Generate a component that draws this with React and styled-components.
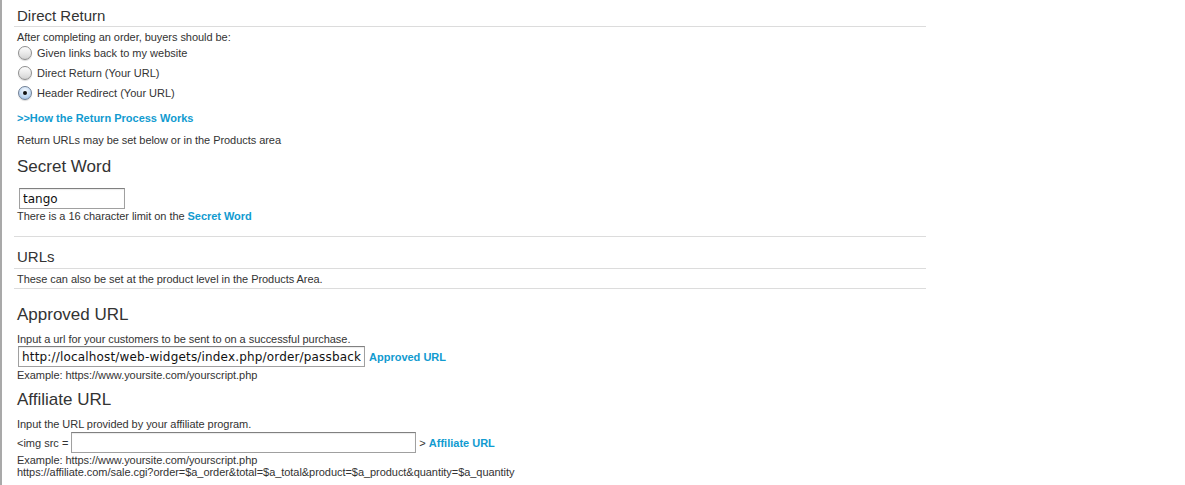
import styled, { createGlobalStyle } from 'styled-components'

const GlobalStyle = createGlobalStyle`
  html, body {
    margin: 0;
    padding: 0;
    background: #fff;
  }
  body {
    font-family: 'Liberation Sans', Arial, Helvetica, sans-serif;
    color: #333;
  }
`

const Page = styled.div`
  min-height: 485px;
  box-sizing: border-box;
  border-left: 2px solid #a9a9a9;
  padding: 5px 0 0 12px;
`

const Content = styled.div`
  width: 912px;
`

const SectionTitle = styled.h3`
  margin: ${(p) => p.$top || 0}px 0 0;
  padding-left: 3px;
  font-size: 15px;
  font-weight: normal;
  line-height: ${(p) => p.$lh || 21}px;
  color: #333;
  border-bottom: 1px solid #dcdcdc;
`

const Heading = styled.h2`
  margin: ${(p) => p.$top || 0}px 0 0;
  padding: 1px 0 0 3px;
  font-size: 17px;
  font-weight: normal;
  line-height: 22px;
  color: #333;
`

const Text = styled.p`
  margin: ${(p) => p.$top || 0}px 0 0;
  padding-left: 3px;
  font-size: 11px;
  line-height: 12px;
  letter-spacing: -0.05px;
  color: #333;
  white-space: nowrap;
`

const Divider = styled.div`
  margin-top: ${(p) => p.$top || 0}px;
  height: 0;
  border-top: 1px solid #dcdcdc;
`

const Link = styled.a`
  color: #119bd0;
  font-weight: bold;
  text-decoration: none;
  cursor: pointer;
`

const LinkLine = styled.p`
  margin: ${(p) => p.$top || 0}px 0 0;
  padding-left: 3px;
  font-size: 11px;
  line-height: 14px;
`

const RadioRow = styled.label`
  display: flex;
  align-items: center;
  height: 20px;
  padding-left: 4px;
  gap: 5px;
  font-size: 11px;
  color: #333;
`

const Radio = styled.span`
  position: relative;
  width: 14px;
  height: 14px;
  box-sizing: border-box;
  border-radius: 50%;
  border: 1px solid ${(p) => (p.$checked ? '#6f7f95' : '#8e8e8e')};
  background: ${(p) =>
    p.$checked
      ? 'radial-gradient(circle at 50% 30%, #f4f9ff 0%, #c5dbf3 55%, #90b4df 100%)'
      : 'linear-gradient(#fdfdfd, #e6e6e6 60%, #d2d2d2)'};
  box-shadow: 0 1px 1px rgba(0, 0, 0, 0.15);

  &::after {
    content: '';
    display: ${(p) => (p.$checked ? 'block' : 'none')};
    position: absolute;
    left: 4px;
    top: 4px;
    width: 4px;
    height: 4px;
    border-radius: 50%;
    background: #111;
  }
`

const Field = styled.input`
  box-sizing: border-box;
  width: ${(p) => p.$width}px;
  height: 21px;
  margin: 0;
  padding: 0 3px;
  border: 1px solid #a0a0a0;
  border-top-color: #808080;
  box-shadow: inset 0 1px 1px rgba(0, 0, 0, 0.08);
  font-family: 'DejaVu Sans', 'Liberation Sans', sans-serif;
  font-size: 12px;
  letter-spacing: ${(p) => p.$spacing || 0}px;
  color: #111;
  background: #fff;
  outline: none;
`

const FieldBlock = styled.div`
  margin: ${(p) => p.$top || 0}px 0 0 5px;
  display: flex;
`

const FieldRow = styled.div`
  margin: ${(p) => p.$top || 0}px 0 0 ${(p) => p.$left ?? 4}px;
  display: flex;
  align-items: center;
  gap: ${(p) => p.$gap || 4}px;
  font-size: 11px;
  color: #333;
  white-space: nowrap;
`

export default function App() {
  return (
    <Page>
      <GlobalStyle />
      <Content>
        <SectionTitle>Direct Return</SectionTitle>
        <Text $top={4}>After completing an order, buyers should be:</Text>
        <RadioRow>
          <Radio />
          Given links back to my website
        </RadioRow>
        <RadioRow>
          <Radio />
          Direct Return (Your URL)
        </RadioRow>
        <RadioRow>
          <Radio $checked />
          Header Redirect (Your URL)
        </RadioRow>
        <LinkLine $top={8}>
          <Link>&gt;&gt;How the Return Process Works</Link>
        </LinkLine>
        <Text $top={9}>Return URLs may be set below or in the Products area</Text>

        <Heading $top={9}>Secret Word</Heading>
        <FieldBlock $top={10}>
          <Field $width={106} defaultValue="tango" />
        </FieldBlock>
        <Text $top={1}>
          There is a 16 character limit on the <Link>Secret Word</Link>
        </Text>
        <Divider $top={14} />

        <SectionTitle $top={9} $lh={22}>URLs</SectionTitle>
        <Text $top={4}>These can also be set at the product level in the Products Area.</Text>
        <Divider $top={3} />

        <Heading $top={14}>Approved URL</Heading>
        <Text $top={7}>Input a url for your customers to be sent to on a successful purchase.</Text>
        <FieldRow $top={1} $left={4}>
          <Field
            $width={347}
            $spacing={0.17}
            defaultValue="http://localhost/web-widgets/index.php/order/passback"
          />
          <Link>Approved URL</Link>
        </FieldRow>
        <Text $top={2}>Example: https://www.yoursite.com/yourscript.php</Text>

        <Heading $top={7}>Affiliate URL</Heading>
        <Text $top={7}>Input the URL provided by your affiliate program.</Text>
        <FieldRow $top={2} $left={3} $gap={3}>
          &lt;img src =
          <Field $width={345} defaultValue="" />
          <span>
            &gt; <Link>Affiliate URL</Link>
          </span>
        </FieldRow>
        <Text $top={1}>Example: https://www.yoursite.com/yourscript.php</Text>
        <Text>https://affiliate.com/sale.cgi?order=$a_order&amp;total=$a_total&amp;product=$a_product&amp;quantity=$a_quantity</Text>
      </Content>
    </Page>
  )
}
